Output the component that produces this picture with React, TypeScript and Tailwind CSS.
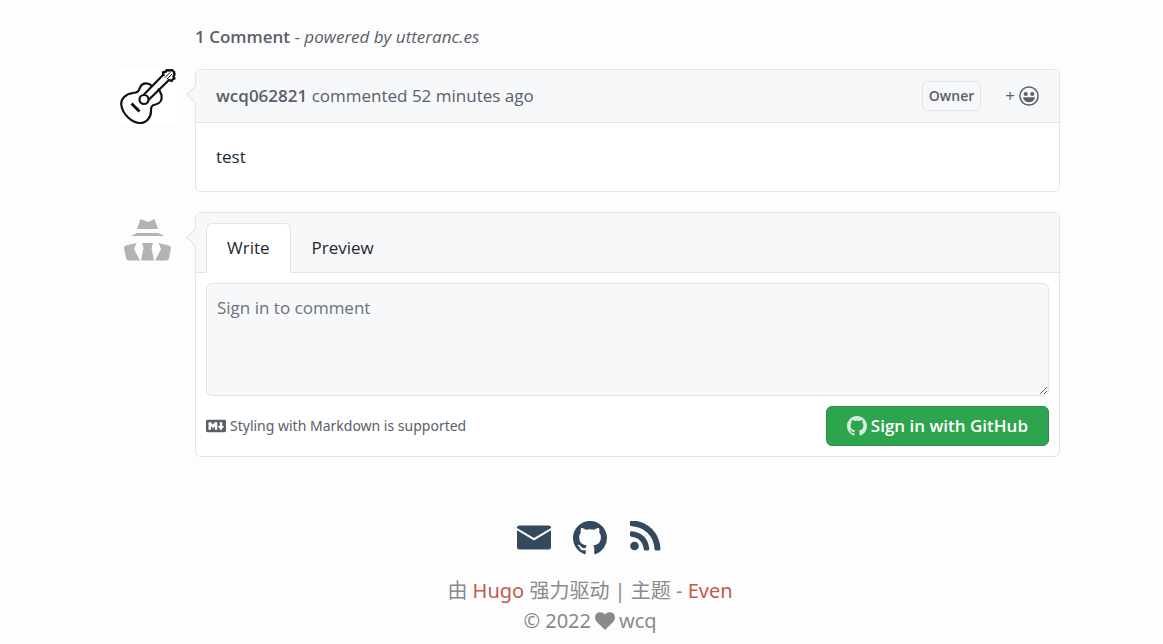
import React, { useState } from 'react'

const GITHUB_PATH =
  'M8 0C3.58 0 0 3.58 0 8c0 3.54 2.29 6.53 5.47 7.59.4.07.55-.17.55-.38 0-.19-.01-.82-.01-1.49-2.01.37-2.53-.49-2.69-.94-.09-.23-.48-.94-.82-1.13-.28-.15-.68-.52-.01-.53.63-.01 1.08.58 1.23.82.72 1.21 1.87.87 2.33.66.07-.52.28-.87.51-1.07-1.78-.2-3.64-.89-3.64-3.95 0-.87.31-1.59.82-2.15-.08-.2-.36-1.02.08-2.12 0 0 .67-.21 2.2.82.64-.18 1.32-.27 2-.27.68 0 1.36.09 2 .27 1.53-1.04 2.2-.82 2.2-.82.44 1.1.16 1.92.08 2.12.51.56.82 1.27.82 2.15 0 3.07-1.87 3.75-3.65 3.95.29.25.54.73.54 1.48 0 1.07-.01 1.93-.01 2.2 0 .21.15.46.55.38A8.013 8.013 0 0016 8c0-4.42-3.58-8-8-8z'

function GithubIcon({ className = '' }: { className?: string }) {
  return (
    <svg viewBox="0 0 16 16" fill="currentColor" className={className} aria-hidden="true">
      <path fillRule="evenodd" d={GITHUB_PATH} />
    </svg>
  )
}

function GuitarAvatar() {
  return (
    <svg viewBox="0 0 56 56" className="size-14 bg-white" fill="none" stroke="#111" strokeWidth="2.2" strokeLinejoin="round" strokeLinecap="round">
      <path d="M32 17C29 14 23 13 20.500 17.500C18.500 22 18.500 23.500 13 24C5 25 1.200 30 1.200 35C2 45 12 54 20 54C27 54 31 48 31 42C30.500 38 32 36 35.500 35.500C40 34.500 42.500 31 41.500 26C41 24 40 22 38.500 20.500" />
      <circle cx="24" cy="30.500" r="4.500" />
      <path d="M24 25.500L43.500 5.500M29 30.500L49.500 10.500" />
      <path d="M43.500 6L43 3.500L46 2.500L47 .8L49.500 1.500L52 1L54 3L54.500 5.500L53.500 7.500L54.500 9.500L52.500 10.500L51.500 12L49 11" fill="#fff" strokeWidth="2.400" />
      <path d="M45 8.500L50 3.500M47 10L52 5" strokeWidth="1" />
      <path d="M11.500 34.500L19.500 42.500" strokeWidth="3" strokeLinecap="butt" />
    </svg>
  )
}

function AnonymousAvatar() {
  return (
    <svg viewBox="0 0 56 56" className="size-14" fill="#b3b3b3">
      <path d="M20.500 7L28 10L34.500 7L38 17H17Z" />
      <path d="M17 21H38L44.500 24H11Z" />
      <path d="M16.500 31L6 33.500Q4 34 4 36L6 46Q6.500 48.500 9 48.500H20L14 37Z" />
      <path d="M38.500 31L49 33.500Q51 34 51 36L49 46Q48.500 48.500 46 48.500H35L41 37Z" />
      <path d="M22 31H33L31.500 36L34 48.500H21L23.500 36Z" />
    </svg>
  )
}

function SmileyIcon() {
  return (
    <svg viewBox="0 0 20 20" className="size-5" fill="currentColor" aria-hidden="true">
      <circle cx="10" cy="10" r="9.100" fill="none" stroke="currentColor" strokeWidth="1.500" />
      <circle cx="6.800" cy="8" r="2" />
      <circle cx="13.200" cy="8" r="2" />
      <path d="M4 11.200H16C15.300 14.500 13 16.200 10 16.200S4.700 14.500 4 11.200Z" />
    </svg>
  )
}

// Little pointer that joins a card to its avatar
function Caret() {
  return <div className="absolute top-[18px] -left-[7px] size-[13px] rotate-45 border-b border-l border-[#e1e4e8] bg-[#f6f8fa]" />
}

function TimelineItem({ avatar, children }: { avatar: React.ReactNode; children: React.ReactNode }) {
  return (
    <div className="mb-5 flex items-start gap-[19px]">
      <div className="shrink-0">{avatar}</div>
      <div className="relative min-w-0 flex-1 rounded-md border border-[#e1e4e8] bg-white">
        {children}
      </div>
    </div>
  )
}

function CommentForm() {
  const [tab, setTab] = useState<'write' | 'preview'>('write')
  const [text, setText] = useState('')

  const tabClass = (active: boolean) =>
    `-mb-px h-[50px] rounded-t-md border px-5 ${
      active ? 'border-[#e1e4e8] border-b-white bg-white' : 'border-transparent'
    }`

  return (
    <form onSubmit={(e) => e.preventDefault()}>
      <div className="flex rounded-t-md border-b border-[#e1e4e8] bg-[#f6f8fa] px-[10px] pt-[10px]">
        <Caret />
        <button type="button" className={tabClass(tab === 'write')} onClick={() => setTab('write')}>
          Write
        </button>
        <button type="button" className={tabClass(tab === 'preview')} onClick={() => setTab('preview')}>
          Preview
        </button>
      </div>
      <div className="p-[10px]">
        <textarea
          disabled
          aria-label="comment"
          placeholder="Sign in to comment"
          value={text}
          onChange={(e) => setText(e.target.value)}
          className="block h-[113px] w-full resize-y rounded-md border border-[#e1e4e8] bg-[#f6f8fa] px-[10px] py-3 leading-6 placeholder:text-[#6a737d]"
        />
        <div className="mt-[10px] flex items-center justify-between">
          <a href="#markdown" className="flex items-center gap-1 font-['Noto_Sans',sans-serif] text-sm text-[#586069]">
            <svg viewBox="0 0 16 16" className="size-5" fill="currentColor" aria-hidden="true">
              <path
                fillRule="evenodd"
                d="M14.85 3c.63 0 1.15.52 1.14 1.15v7.7c0 .63-.51 1.15-1.15 1.15H1.15C.52 13 0 12.48 0 11.84V4.15C0 3.52.52 3 1.15 3ZM9 11V5H7L5.5 7 4 5H2v6h2V8l1.5 1.92L7 8v3Zm2.99.5L14.5 8H13V5h-2v3H9.5Z"
              />
            </svg>
            Styling with Markdown is supported
          </a>
          <button
            type="submit"
            className="flex h-10 items-center gap-1 rounded-md border border-[#2a8f47] bg-[#2ea44f] px-5 font-semibold text-white"
          >
            <GithubIcon className="size-5 opacity-80" />
            Sign in with GitHub
          </button>
        </div>
      </div>
    </form>
  )
}

function Footer() {
  return (
    <footer className="mt-[63px] text-center font-['Noto_Sans','Noto_Sans_CJK_SC',sans-serif] text-[20px] leading-[30px] text-[#8a8a8a]">
      <div className="mb-5 flex h-9 items-center justify-center gap-[22px] text-[#34495e]">
        <a href="#email" aria-label="email">
          <svg viewBox="0 0 34 34" className="size-[34px]" fill="currentColor">
            <path d="M2.500 4.500H31.500Q34 4.500 34 6V7L17 17L0 7V6Q0 4.500 2.500 4.500Z" />
            <path d="M0 9.300L17 19.500L34 9.300V26Q34 28.500 31.500 28.500H2.500Q0 28.500 0 26Z" />
          </svg>
        </a>
        <a href="#github" aria-label="github">
          <GithubIcon className="size-[34px]" />
        </a>
        <a href="#rss" aria-label="rss">
          <svg viewBox="0 0 34 34" className="size-[34px]" fill="currentColor">
            <circle cx="5.500" cy="25" r="4.300" />
            <path d="M1 1Q1 -.8 2 -.8C19 0 31 12 31.500 28Q31.500 29.400 30 29.400H27Q25.500 29.400 25.500 28C25 15 15.500 6 2.500 5.200Q1 5 1 4Z" />
            <path d="M1 11.500Q1 10.200 2.500 10.200C13 11 19.500 17.500 20.300 28Q20.300 29.400 19 29.400H16Q15 29.400 14.700 28C14 21 9.500 16.600 2.500 15.800Q1 15.600 1 14.600Z" />
          </svg>
        </a>
      </div>
      <p>
        由 <a href="#hugo" className="text-[#c05b4d]">Hugo</a> 强力驱动 | 主题 -{' '}
        <a href="#even" className="text-[#c05b4d]">Even</a>
      </p>
      <p className="flex items-center justify-center gap-1">
        © 2022
        <svg viewBox="0 0 20 18" className="h-[18px] w-5" fill="currentColor" aria-label="love">
          <path d="M10 18L1.500 9.500C-.5 7.300-.3 3.500 1.600 1.600C4-.6 7.800-.3 10 2.600C12.200-.3 16-.6 18.400 1.600C20.300 3.500 20.500 7.300 18.500 9.500Z" />
        </svg>
        wcq
      </p>
    </footer>
  )
}

export default function App() {
  return (
    <div className="min-h-screen bg-[#fdfdfd] pt-6 pr-[103px] pl-[120px] font-['Open_Sans','Noto_Sans_CJK_SC',sans-serif] text-[17px] leading-[26px] text-[#24292e]">
      <h1 className="mb-[19px] pl-[75px] text-[#586069]">
        <a href="#comments" className="font-semibold">1 Comment</a> -{' '}
        <a href="#utterances" className="italic">powered by utteranc.es</a>
      </h1>

      <TimelineItem avatar={<GuitarAvatar />}>
        <header className="flex h-[53px] items-center rounded-t-md border-b border-[#e1e4e8] bg-[#f6f8fa] px-5 text-[#586069]">
          <Caret />
          <span className="flex-1">
            <a href="#user" className="font-semibold">wcq062821</a> commented{' '}
            <a href="#comment">52 minutes ago</a>
          </span>
          <span className="rounded-md border border-[#e1e4e8] px-[6px] text-sm leading-7 font-semibold">Owner</span>
          <button type="button" aria-label="Add reaction" className="ml-6 flex items-center gap-1">
            <span>+</span>
            <SmileyIcon />
          </button>
        </header>
        <p className="px-5 py-[21px]">test</p>
      </TimelineItem>

      <TimelineItem avatar={<AnonymousAvatar />}>
        <CommentForm />
      </TimelineItem>

      <Footer />
    </div>
  )
}
